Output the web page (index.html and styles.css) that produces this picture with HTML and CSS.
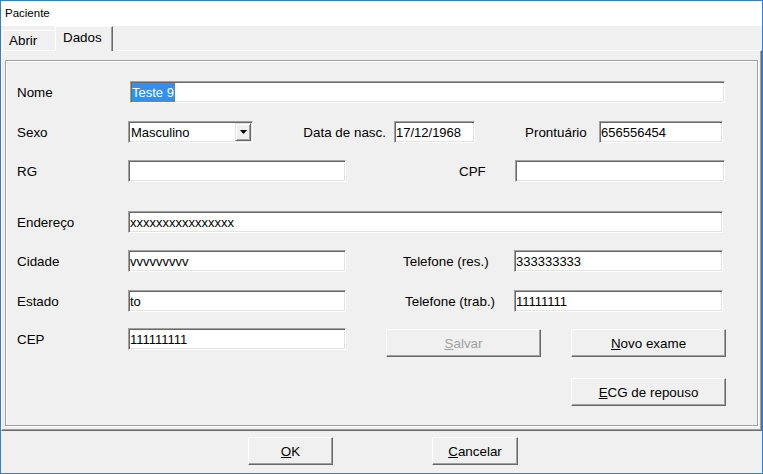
FILE: index.html
```html
<!DOCTYPE html>
<html lang="pt-BR">
<head>
    <meta charset="UTF-8">
    <meta name="viewport" content="width=device-width, initial-scale=1.0">
    <title>Paciente</title>
    <link rel="stylesheet" href="styles.css">
</head>
<body>
    <div class="window">
        <div class="titlebar">Paciente</div>

        <div class="tabs">
            <div class="tab">Abrir</div>
            <div class="tab active">Dados</div>
        </div>

        <div class="page">
            <div class="group">
                <div class="row">
                    <span class="label label-wide">Nome</span>
                    <div class="field w-full-a"><span class="selected">Teste 9</span></div>
                </div>

                <div class="row row-2">
                    <span class="label">Sexo</span>
                    <div class="field select">
                        <span class="select-text">Masculino</span>
                        <span class="drop-btn">
                            <svg width="7" height="4" viewBox="0 0 7 4"><polygon points="0,0 7,0 3.5,4" fill="#000"/></svg>
                        </span>
                    </div>
                    <span class="label label-nasc">Data de nasc.</span>
                    <div class="field w-date">17/12/1968</div>
                    <span class="label label-pront">Prontuário</span>
                    <div class="field w-pront">656556454</div>
                </div>

                <div class="row row-3">
                    <span class="label">RG</span>
                    <div class="field w-short"></div>
                    <span class="label label-cpf">CPF</span>
                    <div class="field w-cpf"></div>
                </div>

                <div class="row row-4">
                    <span class="label">Endereço</span>
                    <div class="field w-full-b">xxxxxxxxxxxxxxxx</div>
                </div>

                <div class="row row-5">
                    <span class="label">Cidade</span>
                    <div class="field w-short">vvvvvvvvv</div>
                    <span class="label label-res">Telefone (res.)</span>
                    <div class="field w-tel">333333333</div>
                </div>

                <div class="row row-6">
                    <span class="label">Estado</span>
                    <div class="field w-short">to</div>
                    <span class="label label-trab">Telefone (trab.)</span>
                    <div class="field w-tel">11111111</div>
                </div>

                <div class="row row-7">
                    <span class="label">CEP</span>
                    <div class="field w-short">111111111</div>
                    <button class="btn btn-salvar" disabled><u>S</u>alvar</button>
                    <button class="btn btn-novo"><u>N</u>ovo exame</button>
                </div>

                <div class="row row-8">
                    <button class="btn btn-ecg"><u>E</u>CG de repouso</button>
                </div>
            </div>
        </div>

        <div class="footer">
            <button class="btn btn-ok"><u>O</u>K</button>
            <button class="btn btn-cancel"><u>C</u>ancelar</button>
        </div>
    </div>
</body>
</html>
```

FILE: styles.css
```css
* {
    box-sizing: border-box;
}

body {
    margin: 0;
    font-family: "Liberation Sans", Arial, sans-serif;
    font-size: 13.4px;
    color: #000;
    background: #f0f0f0;
}

.window {
    width: 763px;
    height: 474px;
    border: 1px solid #2a80d5;
    background: #f0f0f0;
    display: flex;
    flex-direction: column;
}

.titlebar {
    height: 25px;
    flex: none;
    background: #fff;
    padding-left: 4px;
    font-size: 11.5px;
    line-height: 24px;
}

/* abas */
.tabs {
    height: 24px;
    flex: none;
    display: flex;
    align-items: flex-end;
    padding-left: 1px;
}

.tab {
    width: 53px;
    height: 20px;
    padding-left: 6px;
    line-height: 19px;
    border-top: 1px solid #fff;
    border-left: 1px solid #fff;
}

.tab.active {
    position: relative;
    width: 58px;
    height: 25px;
    margin-bottom: -1px;
    padding: 2px 0 0 7px;
    line-height: 18px;
    background: #f0f0f0;
    border-right: 1px solid #696969;
    box-shadow: inset -1px 0 0 #a0a0a0;
}

.page {
    height: 381px;
    flex: none;
    border-top: 1px solid #fff;
    border-left: 1px solid #fff;
    border-right: 1px solid #696969;
    border-bottom: 1px solid #696969;
    box-shadow: inset -1px -1px 0 #a0a0a0;
    padding: 9px 3px 0 3px;
}

.group {
    height: 366px;
    border: 1px solid #a0a0a0;
    box-shadow: 1px 1px 0 #fff, inset 1px 1px 0 #fff;
    padding: 20px 0 0 11px;
}

/* linhas do formulário */
.row {
    display: flex;
    align-items: flex-start;
    height: 22px;
}

.row-2 { margin-top: 18px; }
.row-3 { margin-top: 17px; }
.row-4 { margin-top: 29px; }
.row-5 { margin-top: 17px; }
.row-6 { margin-top: 18px; }
.row-7 { margin-top: 16px; height: 29px; }
.row-8 { margin-top: 21px; height: 28px; }

.label {
    flex: none;
    width: 111px;
    padding-top: 1px;
    line-height: 22px;
    white-space: nowrap;
}

.label-wide { width: 113px; }

.label-nasc {
    width: 141px;
    padding-right: 8px;
    text-align: right;
}

.label-pront {
    width: 74px;
    margin-left: 50px;
}

.label-cpf {
    width: 169px;
    padding-left: 113px;
}

.label-res {
    width: 168px;
    padding-left: 57px;
}

.label-trab {
    width: 168px;
    padding-left: 59px;
}

.field {
    flex: none;
    height: 22px;
    background: #fff;
    border: 1px solid;
    border-color: #a0a0a0 #fff #fff #a0a0a0;
    box-shadow: inset 1px 1px 0 #696969, inset -1px -1px 0 #e3e3e3;
    padding: 1px 0 0 1px;
    font-size: 13px;
    line-height: 19px;
    white-space: nowrap;
    overflow: hidden;
}

.w-full-a { width: 595px; }
.w-full-b { width: 595px; }
.w-date { width: 81px; }
.w-pront { width: 124px; }
.w-short { width: 218px; }
.w-cpf { width: 210px; }
.w-tel { width: 209px; }

.selected {
    display: inline-block;
    background: #3390ee;
    color: #fff;
    line-height: 18px;
    padding: 1px 1px 0 0;
}

.select {
    width: 125px;
    display: flex;
    padding-right: 1px;
}

.select-text {
    flex: 1;
    padding-left: 1px;
}

.drop-btn {
    width: 16px;
    height: 18px;
    display: flex;
    align-items: center;
    justify-content: center;
    background: #f0f0f0;
    border: 1px solid;
    border-color: #e3e3e3 #696969 #696969 #e3e3e3;
    box-shadow: inset 1px 1px 0 #fff, inset -1px -1px 0 #a0a0a0;
}

/* botões */
.btn {
    flex: none;
    height: 28px;
    padding: 0;
    background: #f0f0f0;
    border: 1px solid;
    border-color: #fff #696969 #696969 #fff;
    box-shadow: inset -1px -1px 0 #a0a0a0;
    font-family: inherit;
    font-size: 13.4px;
    color: #000;
    text-align: center;
}

.btn:disabled {
    color: #a0a0a0;
}

.btn-salvar {
    width: 155px;
    margin: 1px 0 0 40px;
}

.btn-novo {
    width: 155px;
    margin: 1px 0 0 30px;
}

.btn-ecg {
    width: 155px;
    margin-left: 554px;
}

.footer {
    flex: 1;
    display: flex;
    align-items: flex-start;
    padding-top: 6px;
}

.btn-ok {
    width: 85px;
    margin-left: 247px;
}

.btn-cancel {
    width: 86px;
    margin-left: 99px;
}
```
